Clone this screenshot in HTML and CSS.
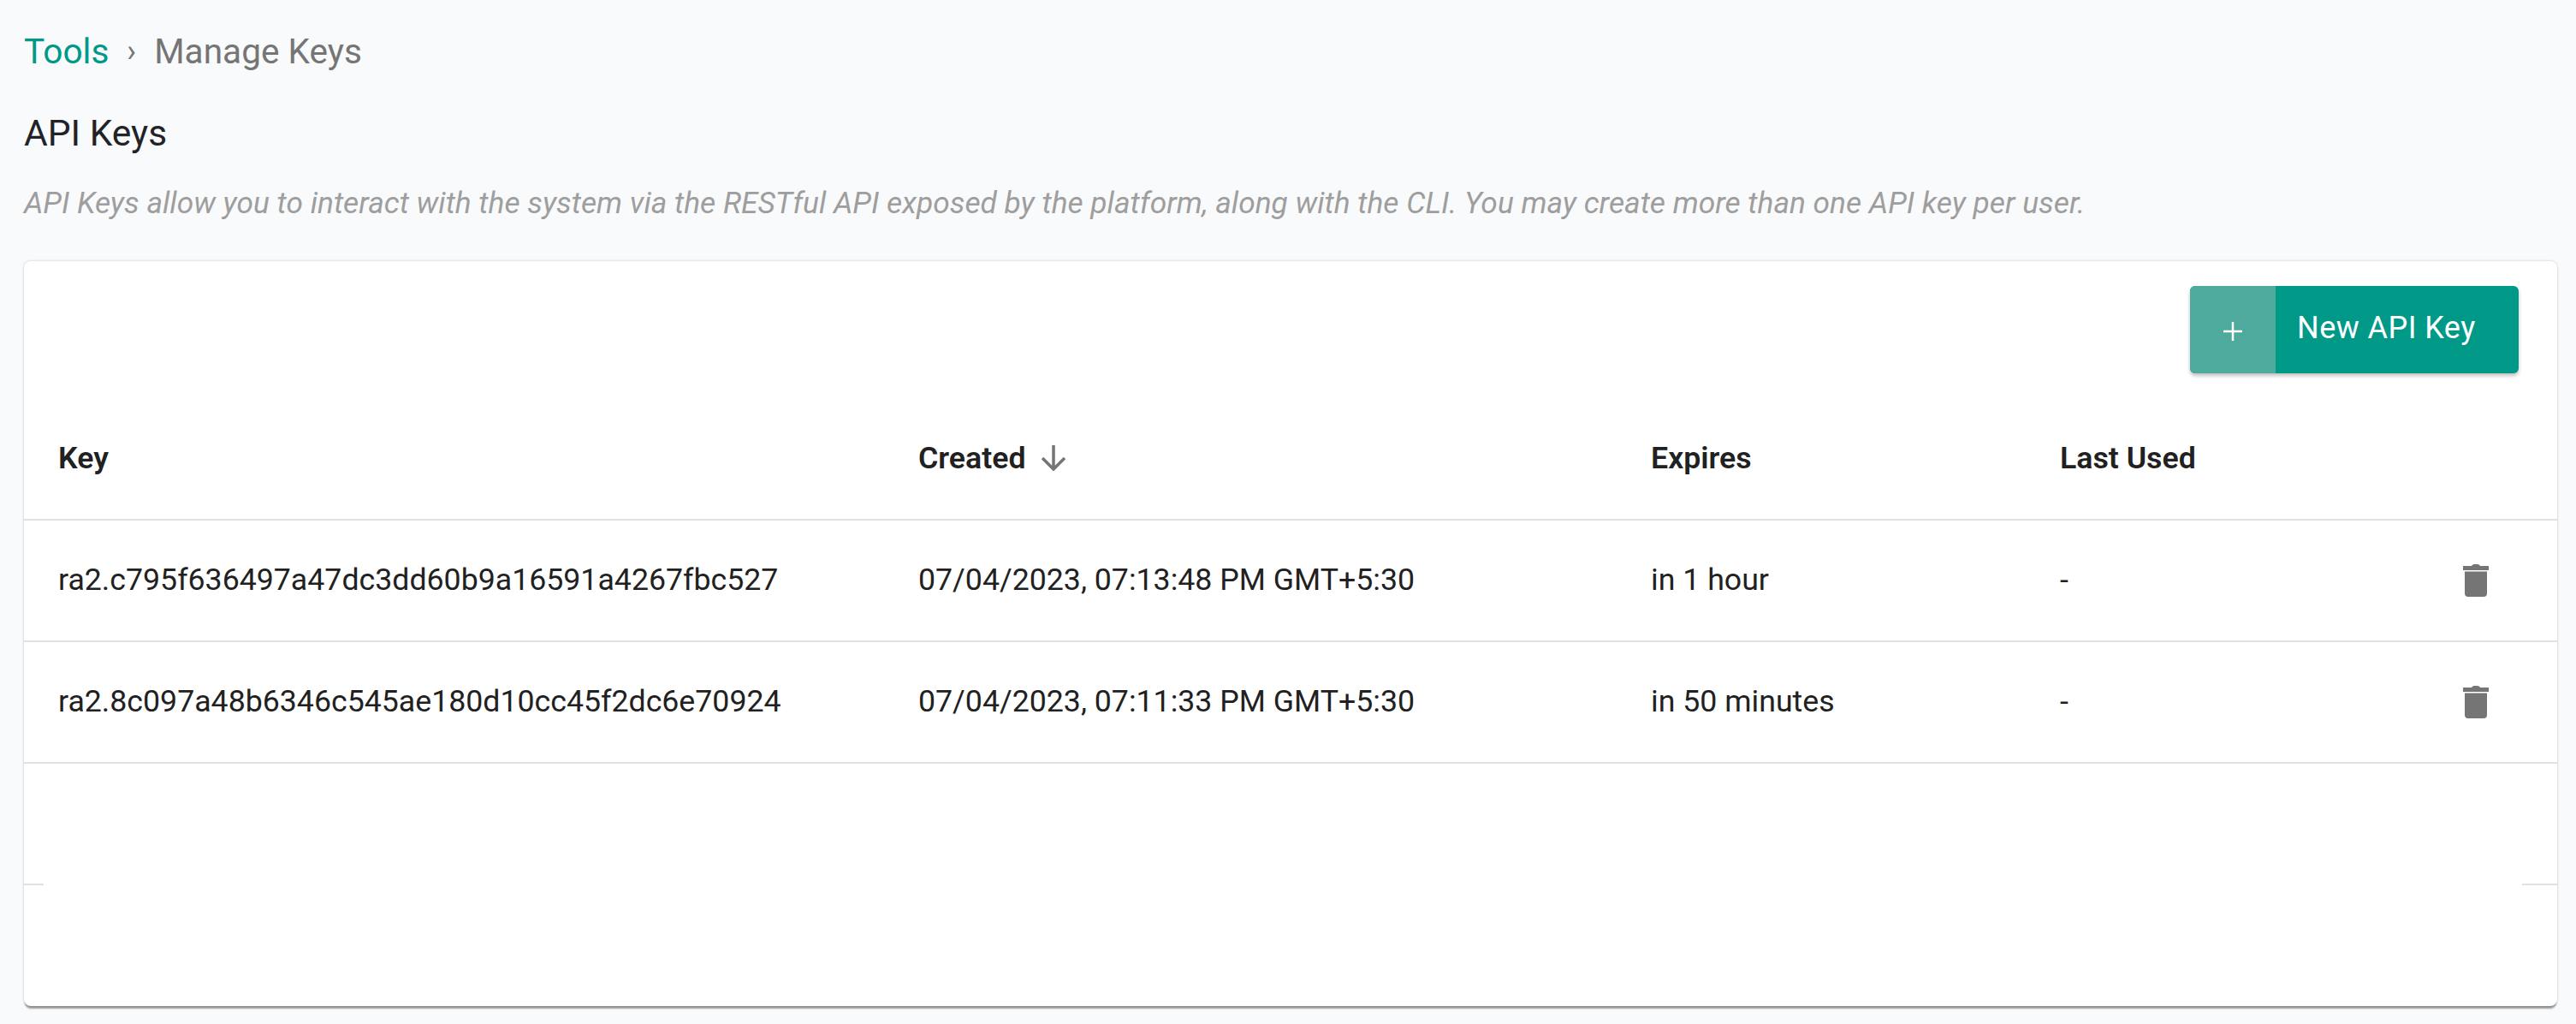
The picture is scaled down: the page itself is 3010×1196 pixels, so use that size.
FILE: index.html
```html
<!DOCTYPE html>
<html lang="en">
<head>
<meta charset="utf-8">
<title>Manage Keys</title>
<link rel="stylesheet" href="styles.css">
</head>
<body>
<main class="page">
  <nav class="crumbs"><a class="crumb-link">Tools</a><span class="crumb-sep">›</span><span class="crumb-current">Manage Keys</span></nav>
  <h1 class="title">API Keys</h1>
  <p class="desc">API Keys allow you to interact with the system via the RESTful API exposed by the platform, along with the CLI. You may create more than one API key per user.</p>
  <section class="card">
    <div class="toolbar">
      <button class="btn"><span class="btn-icon"><svg class="plus" viewBox="0 0 22 22"><path d="M11 0v22M0 11h22"/></svg></span><span class="btn-label">New API Key</span></button>
    </div>
    <div class="row head">
      <div class="cell">Key</div>
      <div class="cell sort">Created<svg class="arrow" viewBox="0 0 28 30"><path d="M14 0v28M1 15l13 13 13-13"/></svg></div>
      <div class="cell">Expires</div>
      <div class="cell">Last Used</div>
      <div class="cell"></div>
    </div>
    <div class="row">
      <div class="cell">ra2.c795f636497a47dc3dd60b9a16591a4267fbc527</div>
      <div class="cell">07/04/2023, 07:13:48 PM GMT+5:30</div>
      <div class="cell">in 1 hour</div>
      <div class="cell">-</div>
      <div class="cell action"><svg class="trash" viewBox="0 0 30 38"><path d="M0 2h10q1-2 3-2h4q2 0 3 2h10v5H0zM2 8.500h26V34a4 4 0 0 1-4 4H6a4 4 0 0 1-4-4z"/></svg></div>
    </div>
    <div class="row">
      <div class="cell">ra2.8c097a48b6346c545ae180d10cc45f2dc6e70924</div>
      <div class="cell">07/04/2023, 07:11:33 PM GMT+5:30</div>
      <div class="cell">in 50 minutes</div>
      <div class="cell">-</div>
      <div class="cell action"><svg class="trash" viewBox="0 0 30 38"><path d="M0 2h10q1-2 3-2h4q2 0 3 2h10v5H0zM2 8.500h26V34a4 4 0 0 1-4 4H6a4 4 0 0 1-4-4z"/></svg></div>
    </div>
    <div class="empty"><div class="stub-l"></div><div class="stub-r"></div></div>
  </section>
</main>
</body>
</html>
```
FILE: styles.css
```css
* { box-sizing: border-box; }
html, body { margin: 0; padding: 0; }
body { background: #f9fafb; font-family: Roboto, "Liberation Sans", sans-serif; color: #212121; }
.page { padding: 30px 22px 21px 28px; }
.crumbs { display: flex; align-items: center; height: 60px; font-size: 40.6px; line-height: 60px; }
.crumb-link { color: #009987; }
.crumb-sep { color: #757575; font-size: 36px; margin: 0 21px; }
.crumb-current { color: #757575; }
.title { margin: 36px 0 0; font-size: 42.5px; font-weight: 400; line-height: 60px; color: #212328; }
.desc { margin: 26px 0 0; font-size: 35.3px; line-height: 50px; font-style: italic; color: #9e9e9e; }
.card { margin-top: 43px; height: 870px; background: #fff; border-radius: 8px; box-shadow: 0 4px 2px -1px rgba(0,0,0,.38), 0 0 3px rgba(0,0,0,.2); }
.toolbar { display: flex; justify-content: flex-end; padding: 29px 45px 30px 0; }
.btn { display: flex; height: 102px; width: 384px; padding: 0; border: 0; border-radius: 6px; overflow: hidden; background: #009987; color: #fff; font: 400 36px Roboto, sans-serif; letter-spacing: .45px; box-shadow: 0 3px 4px rgba(0,0,0,.25); }
.btn-icon { display: flex; align-items: center; justify-content: center; width: 100px; height: 102px; background: #4faa9e; }
.plus { width: 22px; height: 22px; margin-top: 3px; fill: none; stroke: #fff; stroke-width: 2.5; }
.btn-label { flex: 1; line-height: 98px; text-align: left; padding-left: 25px; }
.row { display: grid; grid-template-columns: 1005px 856px 478px 1fr 200px; align-items: center; height: 142px; padding: 0 0 2px 40px; border-bottom: 2px solid #e0e0e0; font-size: 35.7px; }
.head { font-weight: 600; }
.sort { display: flex; align-items: center; }
.arrow { width: 28px; height: 30px; margin-left: 18px; fill: none; stroke: #757575; stroke-width: 3.5; }
.action { display: flex; justify-content: flex-end; padding-right: 80px; }
.trash { width: 30px; height: 38px; margin-top: 2px; fill: #757575; }
.empty { display: flex; justify-content: space-between; height: 142px; }
.stub-l, .stub-r { align-self: flex-end; height: 2px; background: #e0e0e0; }
.stub-l { width: 23px; }
.stub-r { width: 41px; }
```
